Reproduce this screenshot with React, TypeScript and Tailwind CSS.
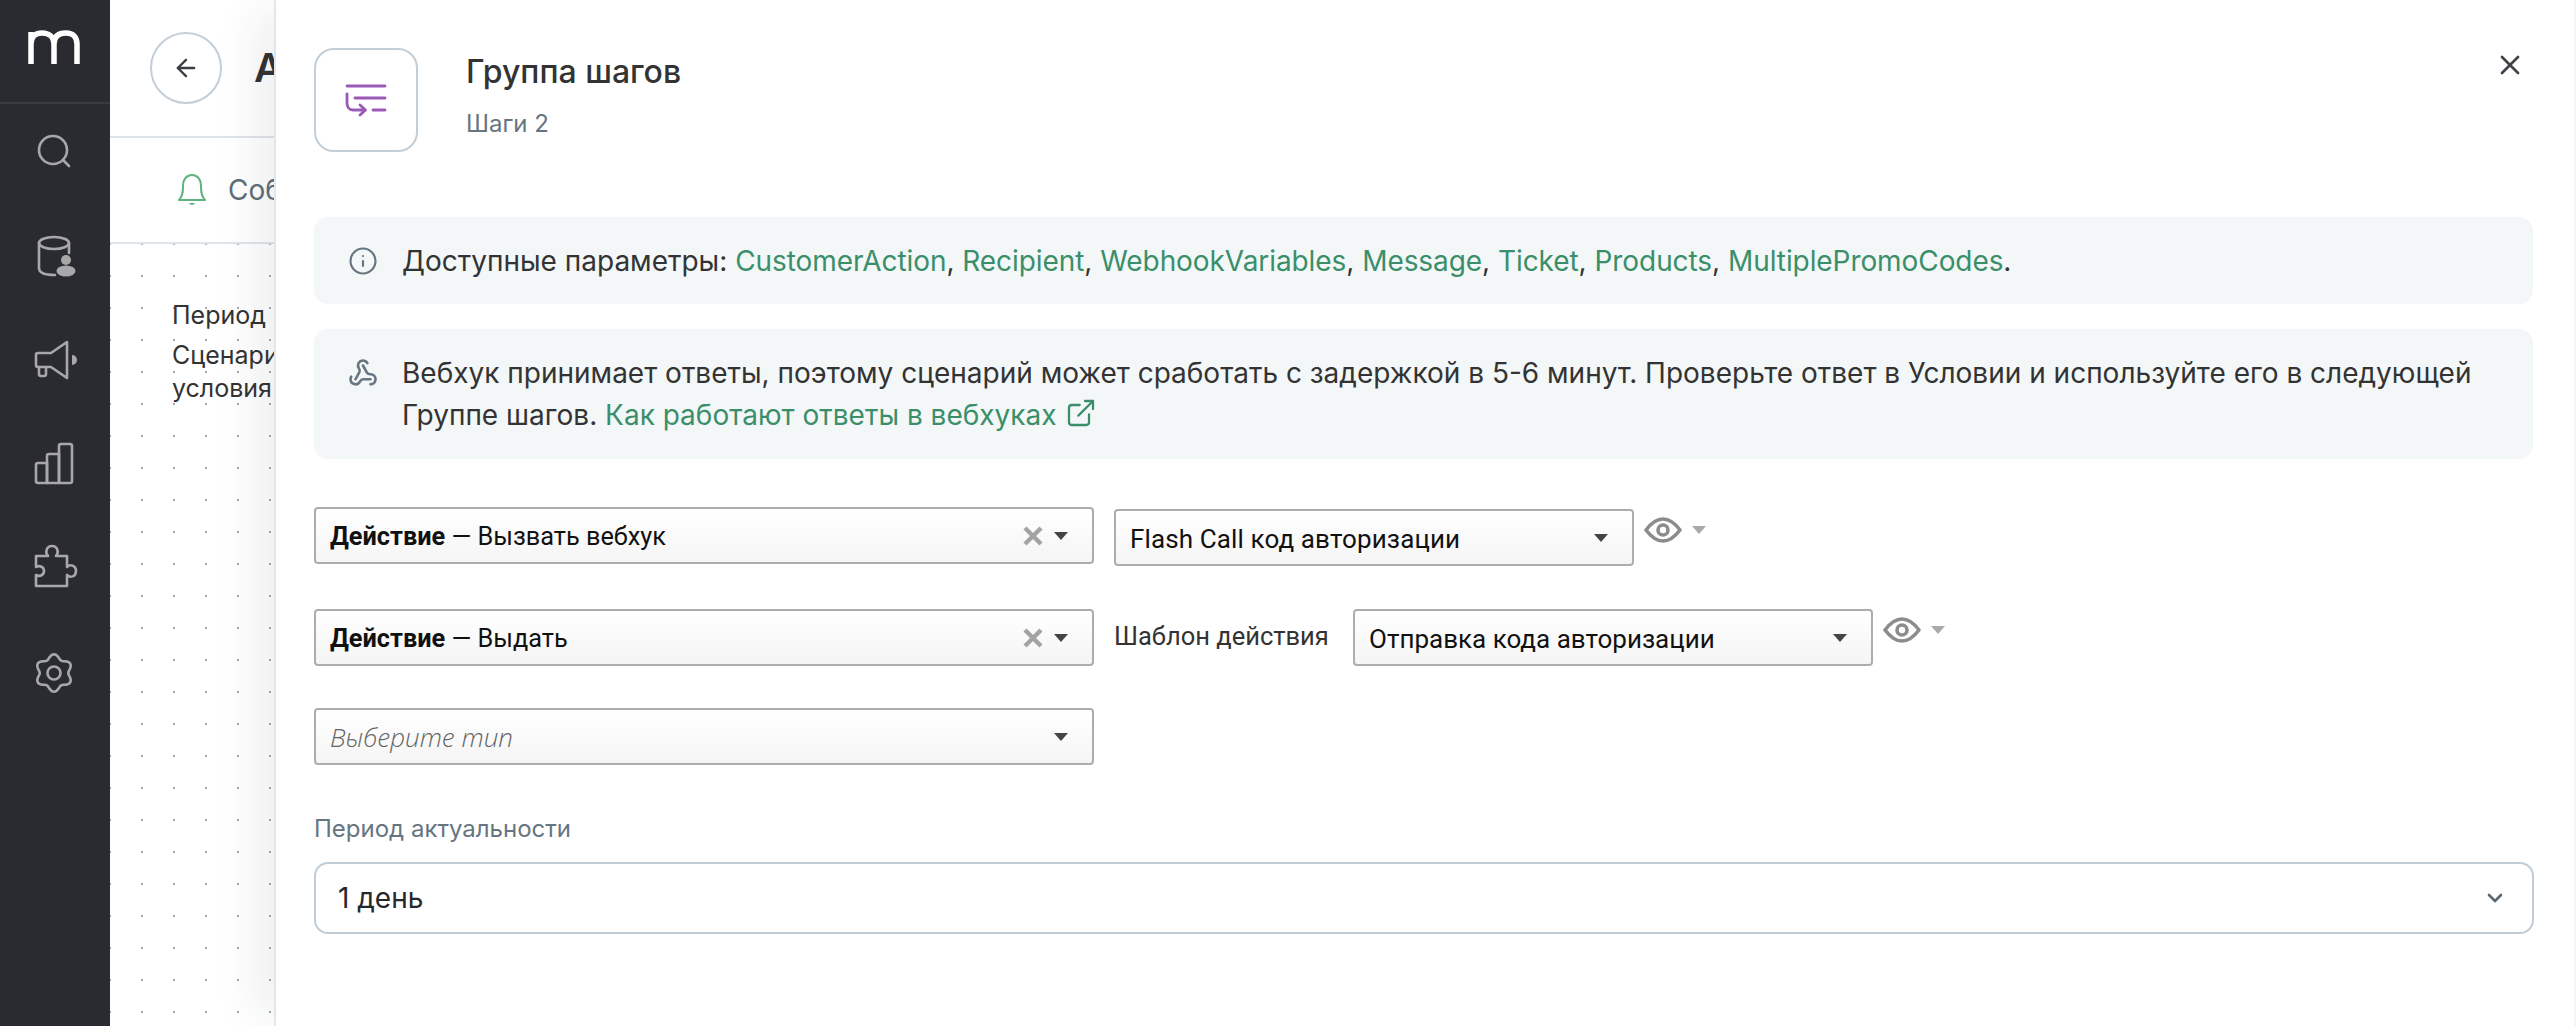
import React from 'react';
import { ArrowLeft, ChevronDown, ExternalLink, Info, Webhook, X } from 'lucide-react';

const inter = 'font-["Inter",sans-serif]';
const selectFont = 'font-["Roboto",sans-serif]';

// six-lobed gear outline for the settings icon
const gearPath = () => {
  const pts: string[] = [];
  for (let i = 0; i <= 120; i++) {
    const a = (i / 120) * Math.PI * 2;
    const r = 16.5 + 2.2 * Math.cos(6 * a);
    pts.push(`${(20 + r * Math.sin(a)).toFixed(2)} ${(20 - r * Math.cos(a)).toFixed(2)}`);
  }
  return `M${pts.join('L')}Z`;
};

const NavIcon = ({ children }: { children: React.ReactNode }) => (
  <div className="h-[103px] flex items-center justify-center">
    <svg width="48" height="48" viewBox="0 0 48 48" fill="none" stroke="#a8a8ab" strokeWidth="2.6" strokeLinecap="round" strokeLinejoin="round" className="ml-[-2px]">
      {children}
    </svg>
  </div>
);

const Sidebar = () => (
  <aside className="w-[110px] shrink-0 bg-[#2a2b30] flex flex-col">
    <div className="h-[104px] border-b-2 border-[#3a3b40] flex items-center justify-center">
      <svg width="60" height="44" viewBox="0 0 60 44" fill="none" stroke="#fff" strokeWidth="5.5" className="mb-[10px]">
        <path d="M6 40V8M6 20C6 12 11 9 17 9C24 9 29 13 29 20V40M29 20C29 12 34 9 41 9C48 9 52 13 52 20V40" />
      </svg>
    </div>
    <div className="flex flex-col mt-[-2px]">
      <NavIcon>
        <circle cx="23" cy="20" r="14" />
        <path d="M33 30l6 6" />
      </NavIcon>
      <NavIcon>
        <ellipse cx="24" cy="10" rx="15" ry="6" />
        <path d="M9 10V35C9 40 15 42 25 42M39 10V20" />
        <circle cx="36" cy="27" r="5" fill="#a8a8ab" stroke="none" />
        <ellipse cx="36" cy="38" rx="9.5" ry="5.5" fill="#a8a8ab" stroke="none" />
      </NavIcon>
      <NavIcon>
        <path d="M37 6L21 17H8a2 2 0 0 0-2 2V29a2 2 0 0 0 2 2H21L37 42Z" />
        <path d="M9 31V38a2 2 0 0 0 2 2H14a2 2 0 0 0 2-2V31" />
        <path d="M42 19a5 5 0 0 1 0 10Z" fill="#a8a8ab" stroke="none" />
      </NavIcon>
      <NavIcon>
        <path d="M6 26a2 2 0 0 1 2-2H17V44H8a2 2 0 0 1-2-2Z" />
        <path d="M17 17a2 2 0 0 1 2-2H29V44H17Z" />
        <path d="M29 7a2 2 0 0 1 2-2H40a2 2 0 0 1 2 2V42a2 2 0 0 1-2 2H29Z" />
      </NavIcon>
      <NavIcon>
        <path d="M6 14H18C15 11 16 4 22 4C28 4 29 11 26 14H37V25C40 22 46 23 46 29C46 35 40 36 37 33V44H6V33C10 35 14 33 14 29C14 25 10 23 6 25Z" />
      </NavIcon>
      <NavIcon>
        <path d={gearPath()} transform="translate(4 8)" />
        <circle cx="24" cy="28" r="6.5" />
      </NavIcon>
    </div>
  </aside>
);

// Only the part of the page that shows left of the drawer
const BackPage = () => (
  <main className={`flex-1 flex flex-col min-w-0 bg-white ${inter}`}>
    <div className="h-[138px] shrink-0 border-b-2 border-[#dfe4e8] flex items-start pl-[40px] pt-[32px] gap-[32px]">
      <div className="w-[72px] h-[72px] rounded-full border-2 border-[#c3ced7] flex items-center justify-center">
        <ArrowLeft size={28} strokeWidth={2} color="#3a3d42" />
      </div>
      <span className="text-[40px] leading-[72px] font-semibold text-[#333]">А</span>
    </div>
    <div className="h-[106px] shrink-0 border-b-2 border-[#dfe4e8] flex items-center pl-[66px] gap-[20px]">
      <svg width="32" height="34" viewBox="0 0 32 34" fill="none" stroke="#5fb37c" strokeWidth="2" strokeLinejoin="round">
        <path d="M3 27C7 23 7 18 7 13C7 6 11 2 16 2C21 2 25 6 25 13C25 18 25 23 29 27Z" />
        <path d="M13 30a3.2 3.2 0 0 0 6 0Z" fill="#5fb37c" stroke="none" />
      </svg>
      <span className="text-[28px] text-[#5e6e78]">Соб</span>
    </div>
    <div className="flex-1 bg-[radial-gradient(circle,#a9a9a9_1px,transparent_1.5px)] bg-[length:32px_32px] bg-[position:16px_-16px] pl-[62px] pt-[55px] text-[25px] leading-[33px] text-[#333]">
      <p className="mb-[7px]">Период</p>
      <p>Сценари<br />условия</p>
    </div>
  </main>
);

const Caret = ({ color = '#444' }: { color?: string }) => (
  <svg width="14" height="8" viewBox="0 0 14 8" className="shrink-0">
    <path d="M0 0H14L7 8Z" fill={color} />
  </svg>
);

const Eye = () => (
  <div className="flex items-center gap-[10px]">
    <svg width="38" height="26" viewBox="0 0 38 26" fill="none" stroke="#8c8c8c" strokeWidth="3.6" strokeLinejoin="round">
      <path d="M2 13C8 5 13 2 19 2C25 2 30 5 36 13C30 21 25 24 19 24C13 24 8 21 2 13Z" />
      <circle cx="19" cy="13" r="5" />
    </svg>
    <Caret color="#aaa" />
  </div>
);

const SelectBox = ({ className, clearable, children }: { className: string; clearable?: boolean; children: React.ReactNode }) => (
  <div className={`h-[57px] shrink-0 flex items-center pl-[14px] pr-[24px] rounded-[4px] border-2 border-[#adadb0] bg-gradient-to-b from-white to-[#f5f5f5] ${selectFont} ${className}`}>
    <div className="flex-1 min-w-0 truncate text-[26px] leading-[36px] pt-[2px] text-[#111]">{children}</div>
    {clearable && (
      <svg width="20" height="20" viewBox="0 0 20 20" fill="none" stroke="#a3a3a3" strokeWidth="4.4" className="shrink-0 mr-[11px]">
        <path d="M2 2L18 18M18 2L2 18" />
      </svg>
    )}
    <Caret />
  </div>
);

const links = ['CustomerAction', 'Recipient', 'WebhookVariables', 'Message', 'Ticket', 'Products', 'MultiplePromoCodes'];

const Drawer = () => (
  <div className={`absolute top-0 bottom-0 left-[274px] right-0 bg-white border-l-2 border-r-2 border-l-[#e2e7eb] border-r-[#f6f6f6] shadow-[-30px_0_40px_-10px_rgba(30,40,50,0.07)] pl-[38px] pr-[41px] pt-[48px] ${inter}`}>
    <button className="absolute top-[49px] right-[48px] text-[#3f4247]">
      <X size={32} strokeWidth={2} />
    </button>

    <div className="flex gap-[48px] h-[104px]">
      <div className="w-[104px] h-[104px] rounded-[20px] border-2 border-[#c3ced7] flex items-center justify-center">
        <svg width="44" height="36" viewBox="0 0 44 36" fill="none" stroke="#9b59b6" strokeWidth="2.8" strokeLinecap="round" strokeLinejoin="round" className="mt-[3px]">
          <path d="M3 2H41M11 14H41M29 26H41" />
          <path d="M3 10V19C3 23 5 26 9 26H21M16 21L21.5 26L16 31" />
        </svg>
      </div>
      <div className="pt-[4px]">
        <h2 className="text-[32px] leading-[40px] font-medium text-[#333]">Группа шагов</h2>
        <p className="mt-[18px] text-[24px] leading-[28px] text-[#66757f]">Шаги 2</p>
      </div>
    </div>

    <div className="mt-[65px] h-[87px] rounded-[14px] bg-[#f4f7f8] flex items-center pl-[34px] gap-[24px]">
      <Info size={30} strokeWidth={1.7} color="#66757f" className="shrink-0" />
      <p className="text-[28px] text-[#333]">
        Доступные параметры:{' '}
        {links.map((l, i) => (
          <React.Fragment key={l}>
            <span className="text-[#3a8f6a] tracking-[-0.08px]">{l}</span>
            {i < links.length - 1 ? ', ' : '.'}
          </React.Fragment>
        ))}
      </p>
    </div>

    <div className="mt-[25px] h-[130px] rounded-[14px] bg-[#f4f7f8] flex items-start pl-[34px] pr-[40px] pt-[23px] gap-[24px]">
      <Webhook size={30} strokeWidth={2.1} color="#66757f" className="shrink-0 mt-[6px]" />
      <p className="text-[28px] leading-[42px] text-[#333]">
        Вебхук принимает ответы, поэтому сценарий может сработать с задержкой в 5-6 минут. Проверьте ответ в Условии и используйте его в следующей Группе шагов.{' '}
        <span className="text-[#3a8f6a]">
          Как работают ответы в вебхуках
          <ExternalLink size={32} strokeWidth={1.7} className="inline ml-[8px] mt-[-8px]" />
        </span>
      </p>
    </div>

    <div className="mt-[48px] flex items-start gap-[20px] h-[60px]">
      <SelectBox className="w-[780px]" clearable>
        <span className="text-[25.3px]"><b>Действие</b> — Вызвать вебхук</span>
      </SelectBox>
      <SelectBox className="w-[520px] mt-[2px]">
        <span className="tracking-[0.12px]">Flash Call код авторизации</span>
      </SelectBox>
      <div className="mt-[10px] ml-[-10px]">
        <Eye />
      </div>
    </div>

    <div className="mt-[42px] flex items-start gap-[20px] h-[57px]">
      <SelectBox className="w-[780px]" clearable>
        <span className="text-[25.3px]"><b>Действие</b> — Выдать</span>
      </SelectBox>
      <span className={`${selectFont} text-[25.5px] leading-[54px] text-[#333] w-[219px] shrink-0 whitespace-nowrap`}>Шаблон действия</span>
      <SelectBox className="w-[520px]">Отправка кода авторизации</SelectBox>
      <div className="mt-[8px] ml-[-10px]">
        <Eye />
      </div>
    </div>

    <div className="mt-[42px]">
      <SelectBox className="w-[780px]">
        <i className='font-["Open_Sans",sans-serif] font-light text-[#666]'>Выберите тип</i>
      </SelectBox>
    </div>

    <label className="block mt-[48px] text-[24px] leading-[32px] text-[#66757f]">Период актуальности</label>
    <div className="mt-[17px] h-[72px] mr-[-1px] rounded-[14px] border-2 border-[#c0ccd6] flex items-center justify-between pl-[22px] pr-[25px] text-[28px] text-[#26282c]">
      <span>1 день</span>
      <ChevronDown size={24} strokeWidth={2.6} color="#5b6870" />
    </div>
  </div>
);

export default function App() {
  return (
    <div className="relative h-[1026px] w-[2576px] flex overflow-hidden bg-white">
      <Sidebar />
      <BackPage />
      <Drawer />
    </div>
  );
}
